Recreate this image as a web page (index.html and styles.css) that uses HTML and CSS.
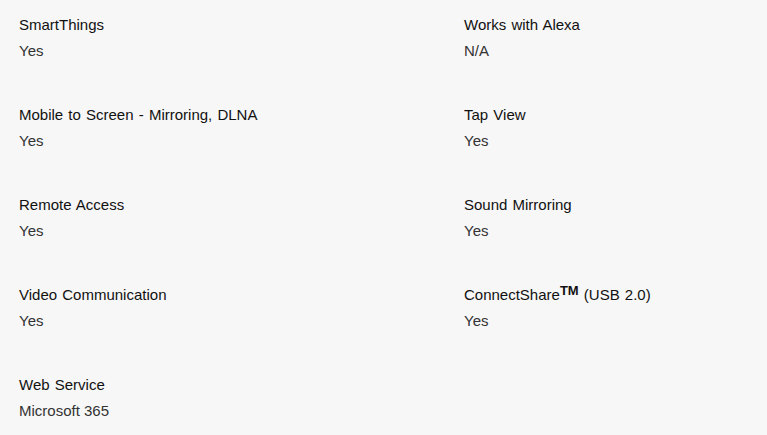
FILE: index.html
```html
<!DOCTYPE html>
<html>
<head>
<meta charset="utf-8">
<link rel="stylesheet" href="styles.css">
</head>
<body>
<div class="specs">
  <div class="spec"><div class="name">SmartThings</div><div class="value">Yes</div></div>
  <div class="spec"><div class="name">Works with Alexa</div><div class="value">N/A</div></div>
  <div class="spec"><div class="name">Mobile to Screen - Mirroring, DLNA</div><div class="value">Yes</div></div>
  <div class="spec"><div class="name">Tap View</div><div class="value">Yes</div></div>
  <div class="spec"><div class="name">Remote Access</div><div class="value">Yes</div></div>
  <div class="spec"><div class="name">Sound Mirroring</div><div class="value">Yes</div></div>
  <div class="spec"><div class="name">Video Communication</div><div class="value">Yes</div></div>
  <div class="spec"><div class="name">ConnectShare<sup class="tm">TM</sup> (USB 2.0)</div><div class="value">Yes</div></div>
  <div class="spec"><div class="name">Web Service</div><div class="value">Microsoft 365</div></div>
</div>
</body>
</html>
```
FILE: styles.css
```css
html, body {
  margin: 0;
  padding: 0;
  background: #f7f7f7;
}
body {
  font-family: "Liberation Sans", Arial, sans-serif;
  overflow: hidden;
}
.specs {
  display: grid;
  grid-template-columns: 445px 1fr;
  row-gap: 44px;
  padding: 15px 19px 0 19px;
}
.name {
  font-size: 15px;
  line-height: 20px;
  color: #111;
  word-spacing: 1px;
}
.value {
  font-size: 15px;
  line-height: 20px;
  color: #333;
  margin-top: 6px;
}
.tm {
  font-size: 13px;
  font-weight: bold;
  line-height: 0;
  vertical-align: 0;
  position: relative;
  top: -5px;
  word-spacing: 0;
}
```
